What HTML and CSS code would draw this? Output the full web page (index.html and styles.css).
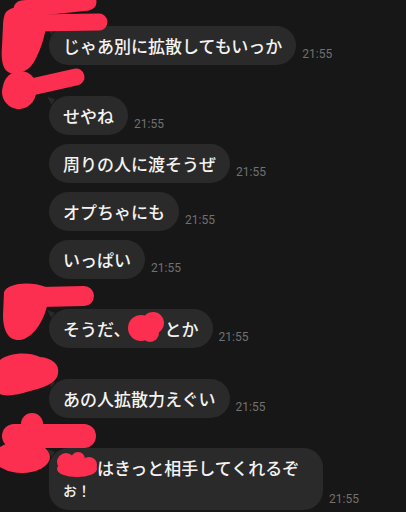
FILE: index.html
```html
<!DOCTYPE html>
<html lang="ja">
<head>
<meta charset="utf-8">
<title>Chat</title>
<link rel="stylesheet" href="styles.css">
</head>
<body>
<main class="chat">
  <section class="group">
    <div class="row"><div class="bubble tail">じゃあ別に拡散してもいっか</div><span class="time">21:55</span></div>
  </section>
  <section class="group">
    <div class="row"><div class="bubble tail">せやね</div><span class="time">21:55</span></div>
    <div class="row"><div class="bubble">周りの人に渡そうぜ</div><span class="time">21:55</span></div>
    <div class="row"><div class="bubble">オプちゃにも</div><span class="time">21:55</span></div>
    <div class="row"><div class="bubble">いっぱい</div><span class="time">21:55</span></div>
  </section>
  <section class="group">
    <div class="row"><div class="bubble tail">そうだ、<span class="redact r1"><svg viewBox="0 0 38 32" width="38" height="32"><circle cx="14" cy="16" r="13"/><circle cx="26" cy="11" r="11"/><circle cx="23" cy="21" r="9"/></svg></span>とか</div><span class="time">21:55</span></div>
  </section>
  <section class="group">
    <div class="row"><div class="bubble tail">あの人拡散力えぐい</div><span class="time">21:55</span></div>
  </section>
  <section class="group">
    <div class="row"><div class="bubble tail wide"><span class="redact r2"><svg viewBox="0 0 42 26" width="42" height="26"><ellipse cx="21" cy="17" rx="20" ry="8"/><circle cx="10" cy="10" r="9"/><circle cx="22" cy="7" r="7"/><circle cx="33" cy="13" r="8"/></svg></span>はきっと相手してくれるぞ<br><span class="small">お！</span></div><span class="time">21:55</span></div>
  </section>
</main>
<svg class="scribbles" viewBox="0 0 406 512" width="406" height="512" aria-hidden="true">
  <g fill="#fd2f50" stroke="#fd2f50" stroke-linecap="round" stroke-linejoin="round">
    <path d="M22 9 L88 2" stroke-width="17" fill="none"/>
    <path d="M34 23 L99 22" stroke-width="17" fill="none"/>
    <path d="M6 12 C14 4 36 4 46 14 C48 28 42 48 34 62 C28 72 16 76 8 72 C2 68 1 58 2 46 L3 26 C3 20 4 15 6 12 Z" stroke="none"/>
    <path d="M27 88 L76 77" stroke-width="17" fill="none"/>
    <path d="M20 88 L19 92" stroke-width="34" fill="none"/>
    <path d="M40 297 L84 296" stroke-width="20" fill="none"/>
    <path d="M4 292 C8 283 30 281 46 287 L48 300 C46 318 34 338 20 340 C8 341 3 330 3 315 Z" stroke="none"/>
    <path d="M0 360 C8 353 28 351 40 357 C52 358 60 364 58 374 C56 384 42 388 30 391 C18 395 6 397 0 394 Z" stroke="none"/>
    <path d="M14 436 L84 436" stroke-width="24" fill="none"/>
    <circle cx="32" cy="424" r="11" stroke="none"/>
    <ellipse cx="22" cy="457" rx="28" ry="16" stroke="none"/>
  </g>
</svg>
</body>
</html>
```

FILE: styles.css
```css
html, body {
  margin: 0;
  padding: 0;
  background: #171717;
}
body {
  position: relative;
  width: 406px;
  height: 512px;
  overflow: hidden;
  font-family: "Noto Sans CJK JP", "Noto Sans", sans-serif;
}
.chat {
  display: flex;
  flex-direction: column;
  gap: 30.5px;
  padding: 26px 0 0 49px;
}
.group {
  display: flex;
  flex-direction: column;
  align-items: flex-start;
  gap: 9px;
}
.row {
  display: flex;
  align-items: flex-end;
  gap: 6px;
}
.bubble {
  position: relative;
  box-sizing: border-box;
  max-width: 274px;
  padding: 9px 14px;
  background: #2a2a2a;
  color: #f3f3f3;
  font-size: 17px;
  font-weight: 500;
  line-height: 21px;
  border-radius: 19.5px;
  white-space: nowrap;
}
.bubble.wide {
  width: 274px;
  white-space: normal;
}
.tail::before {
  content: "";
  position: absolute;
  left: -2px;
  top: 1px;
  width: 8px;
  height: 8px;
  background: #2a2a2a;
  clip-path: polygon(0 0, 100% 35%, 55% 100%);
}
.small {
  font-size: 14px;
}
.time {
  font-family: Roboto, "Liberation Sans", sans-serif;
  font-size: 12px;
  line-height: 14px;
  color: #717171;
  margin-bottom: 4px;
  white-space: nowrap;
}
.redact {
  position: relative;
  display: inline-block;
  width: 34px;
  height: 21px;
  vertical-align: top;
}
.redact svg {
  position: absolute;
  fill: #fd2f50;
}
.r1 svg {
  left: -4px;
  top: -6px;
}
.r2 svg {
  left: -7px;
  top: -5px;
}
.scribbles {
  position: absolute;
  left: 0;
  top: 0;
  pointer-events: none;
}
```
